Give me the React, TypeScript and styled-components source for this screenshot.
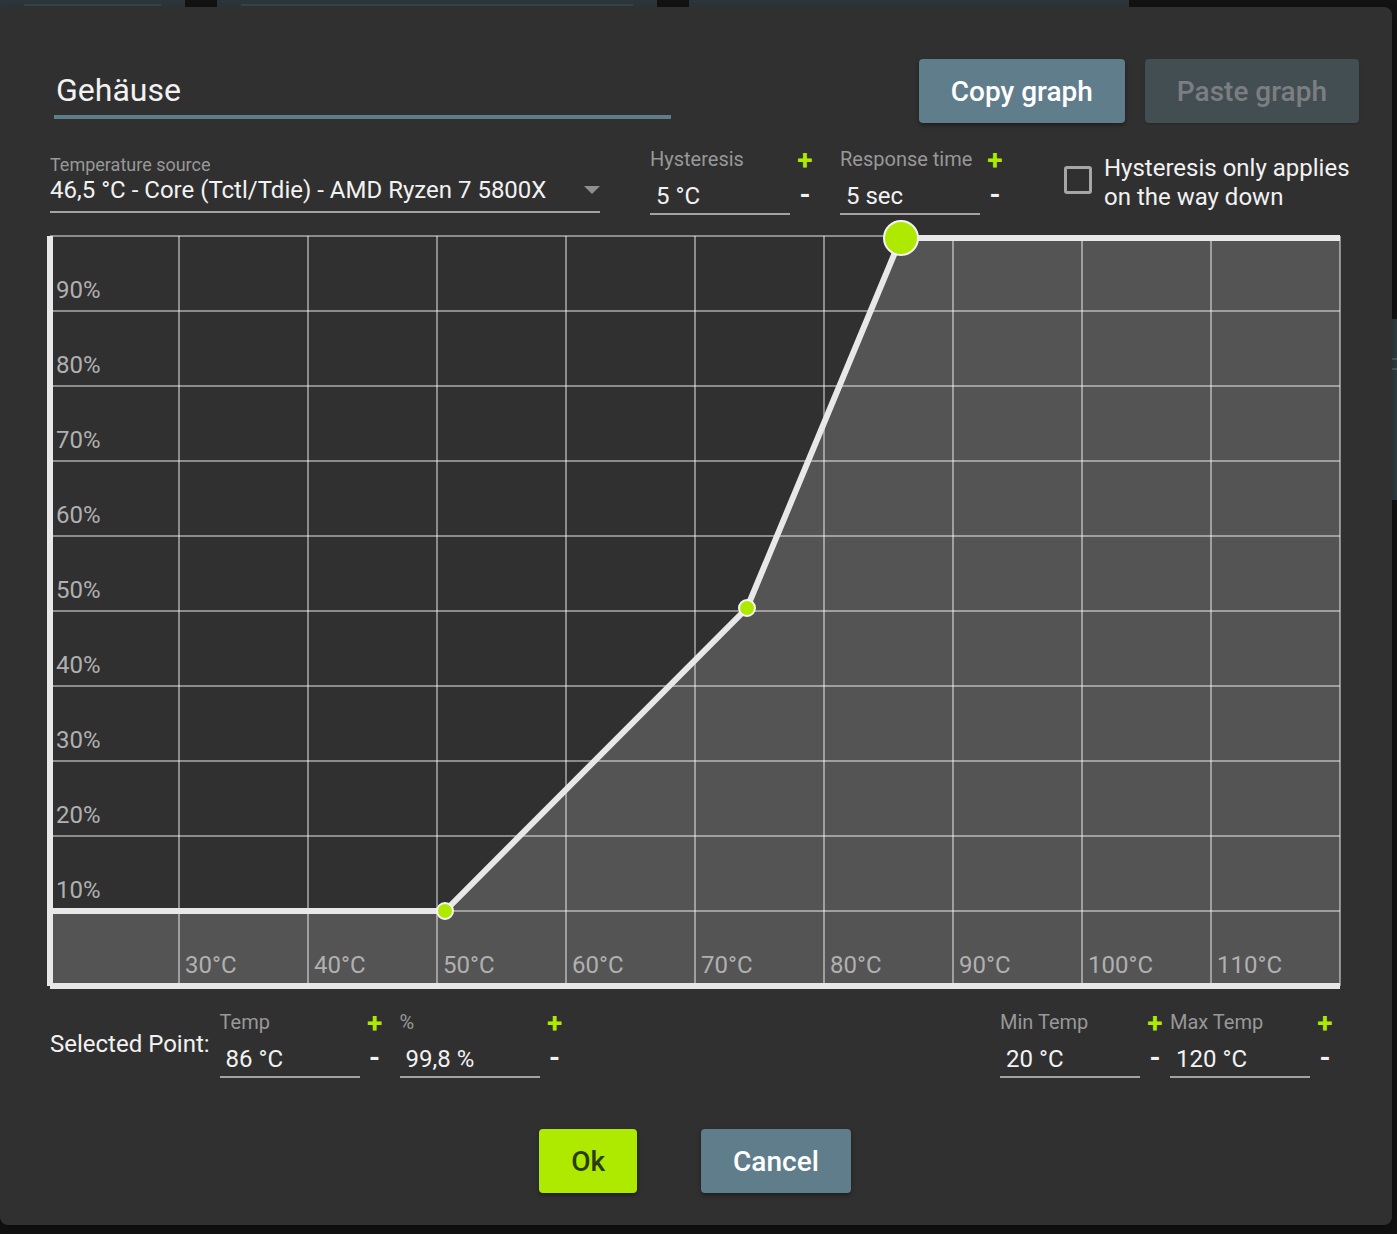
import React, { useId, useState } from "react";
import styled, { createGlobalStyle } from "styled-components";

const color = {
  page: "#121212",
  card: "#2b353a",
  cardLine: "#35444b",
  dialog: "#303030",
  text: "#f2f2f2",
  muted: "#989898",
  line: "#a3a3a3",
  primary: "#607d8b",
  accent: "#aeea00",
};

const GlobalStyle = createGlobalStyle`
  * { box-sizing: border-box; }
  body {
    margin: 0;
    background: ${color.page};
    color: ${color.text};
    font: 24px/28px Roboto, "Liberation Sans", sans-serif;
  }
  button, input, select { font: inherit; color: inherit; margin: 0; border-radius: 0; }
`;

const Screen = styled.div`
  display: grid;
  grid-template-columns: minmax(0, 1fr);
  min-height: 100vh;
  overflow: hidden;
`;

const Backdrop = styled.div`
  grid-area: 1 / 1;
  display: flex;
  flex-direction: column;
  align-items: flex-end;
  gap: 32px;
`;

const CardRow = styled.div`
  display: flex;
  align-self: stretch;
  gap: 32px;
  height: 287px;
`;

const FanCard = styled.div<{ $width: number; $lined?: boolean }>`
  flex: none;
  width: ${(p) => p.$width}px;
  padding: 4px 24px;
  background: ${color.card};

  &::before {
    content: "";
    display: ${(p) => (p.$lined ? "block" : "none")};
    height: 2px;
    background: ${color.cardLine};
  }
`;

const SideCard = styled.div`
  display: flex;
  flex-direction: column;
  gap: 8px;
  width: 440px;
  height: 181px;
  padding-top: 39px;
  background: #303c42;
`;

const SideLine = styled.div`
  height: 2px;
  background: #4d5a60;
`;

const Dialog = styled.form`
  grid-area: 1 / 1;
  align-self: start;
  display: flex;
  flex-direction: column;
  margin: 7px 5px 9px 0;
  padding: 52px 0 32px;
  border-radius: 8px;
  background: ${color.dialog};
  box-shadow: 0 4px 8px rgba(0, 0, 0, 0.3);
  z-index: 1;
`;

const Header = styled.header`
  display: flex;
  gap: 20px;
  padding: 0 33px 0 54px;
`;

const NameInput = styled.input`
  flex: 0 1 617px;
  min-width: 0;
  height: 60px;
  margin-right: auto;
  padding: 6px 2px 0;
  border: 0;
  border-bottom: 4px solid ${color.primary};
  outline: 0;
  background: none;
  font-size: 32px;
`;

const Button = styled.button<{ $accent?: boolean }>`
  height: 64px;
  padding: 2px 32px 0;
  border: 0;
  border-radius: 4px;
  background: ${(p) => (p.$accent ? color.accent : color.primary)};
  color: ${(p) => (p.$accent ? "#2a3d00" : "#fff")};
  font-size: 28px;
  font-weight: 500;
  white-space: nowrap;
  box-shadow: 0 2px 4px rgba(0, 0, 0, 0.4);

  &:disabled {
    background: #434e53;
    color: #7b7f81;
    box-shadow: 0 1px 2px rgba(0, 0, 0, 0.2);
  }
`;

const Controls = styled.div`
  display: flex;
  align-items: flex-end;
  gap: 20px;
  padding: 24px 40px 0 50px;
`;

const Source = styled.div`
  display: grid;
  flex: 0 1 550px;
  grid-template-columns: minmax(0, 1fr);
  margin: 0 30px 2px 0;
`;

const SourceLabel = styled.label`
  color: ${color.muted};
  font-size: 18px;
  line-height: 20px;
`;

const SourceSelect = styled.select`
  grid-area: 2 / 1;
  height: 38px;
  padding: 0 24px 6px 0;
  border: 0;
  border-bottom: 2px solid ${color.line};
  outline: 0;
  appearance: none;
  background: none;

  option { background: ${color.dialog}; }
`;

const Arrow = styled.svg`
  grid-area: 2 / 1;
  align-self: center;
  justify-self: end;
  margin-bottom: 8px;
  pointer-events: none;
`;

const StepperBox = styled.div`
  display: flex;
  flex: none;
  width: 170px;
`;

const StepperField = styled.div`
  display: flex;
  flex: 1;
  flex-direction: column;
  min-width: 0;
`;

const StepperLabel = styled.label`
  color: ${color.muted};
  font-size: 20px;
  line-height: 24px;
`;

const StepperInput = styled.input`
  width: 100%;
  height: 44px;
  padding: 8px 6px 0;
  border: 0;
  border-bottom: 2px solid ${color.line};
  outline: 0;
  background: none;
`;

const StepperButtons = styled.div`
  display: flex;
  flex-direction: column;
  gap: 6px;
  width: 30px;
`;

const StepButton = styled.button<{ $plus?: boolean }>`
  height: 28px;
  padding: 0;
  border: 0;
  background: none;
  color: ${(p) => (p.$plus ? color.accent : color.text)};
  font-size: 28px;
  font-weight: 700;
  line-height: 28px;
`;

const Check = styled.label`
  display: flex;
  align-items: center;
  gap: 12px;
  margin-left: auto;
  padding-bottom: 3px;
  line-height: 29px;
`;

const CheckBox = styled.input`
  flex: none;
  width: 28px;
  height: 28px;
  border: 3px solid #a6a6a6;
  border-radius: 3px;
  appearance: none;

  &:checked { background: ${color.accent}; }
`;

const CheckText = styled.span`
  width: 248px;
  padding-top: 6px;
`;

const ChartArea = styled.div`
  padding: 21px 52px 24px 50px;
`;

const ChartSvg = styled.svg`
  display: block;
  width: 100%;
  height: auto;
  overflow: visible;
  font-size: 24px;
`;

const PointRow = styled.div`
  display: flex;
  align-items: center;
  padding: 0 52px 0 50px;
`;

const PointSteppers = styled.div`
  display: flex;
  gap: 10px;
  margin: 0 auto 0 10px;
`;

const Actions = styled.footer`
  display: flex;
  justify-content: center;
  gap: 64px;
  padding: 51px 52px 0 50px;
`;

type StepperProps = { label: string; unit: string; initial: number };

function Stepper({ label, unit, initial }: StepperProps) {
  const id = useId();
  const format = (n: number) => `${String(n).replace(".", ",")} ${unit}`;
  const [text, setText] = useState(format(initial));
  const step = (by: number) => {
    const current = parseFloat(text.replace(",", ".")) || 0;
    setText(format(Math.round((current + by) * 10) / 10));
  };
  return (
    <StepperBox>
      <StepperField>
        <StepperLabel htmlFor={id}>{label}</StepperLabel>
        <StepperInput id={id} value={text} onChange={(e) => setText(e.target.value)} />
      </StepperField>
      <StepperButtons>
        <StepButton type="button" $plus onClick={() => step(1)}>+</StepButton>
        <StepButton type="button" onClick={() => step(-1)}>-</StepButton>
      </StepperButtons>
    </StepperBox>
  );
}

const WIDTH = 1290;
const HEIGHT = 750;
const COLUMN = 129;
const ROW = 75;
const points = [
  { x: 395, y: 675, r: 8 },
  { x: 697, y: 372, r: 8 },
  { x: 851, y: 2, r: 17 },
];
const steps = [1, 2, 3, 4, 5, 6, 7, 8, 9];

function FanCurve() {
  const curve = [
    `0,${points[0].y}`,
    ...points.map((p) => `${p.x},${p.y}`),
    `${WIDTH},${points[2].y}`,
  ].join(" ");
  return (
    <ChartSvg viewBox={`0 0 ${WIDTH} ${HEIGHT}`} role="img" aria-label="Fan curve">
      <polygon points={`${curve} ${WIDTH},${HEIGHT} 0,${HEIGHT}`} fill="#545454" />
      <g stroke="#fff" strokeOpacity="0.44" strokeWidth="2">
        {[0, ...steps].map((n) => (
          <line key={`h${n}`} x1="0" x2={WIDTH} y1={n * ROW} y2={n * ROW} />
        ))}
        {[...steps, 10].map((n) => (
          <line key={`v${n}`} x1={n * COLUMN} x2={n * COLUMN} y1="0" y2={HEIGHT} />
        ))}
      </g>
      <g fill="#b0b0b0">
        {steps.map((n) => (
          <text key={`p${n}`} x="6" y={(10 - n) * ROW - 13}>{n * 10}%</text>
        ))}
        {steps.map((n) => (
          <text key={`t${n}`} x={n * COLUMN + 6} y={HEIGHT - 13}>{20 + n * 10}°C</text>
        ))}
      </g>
      <g stroke="#e8e8e8" strokeWidth="6" fill="none">
        <line x1="0" x2="0" y1="0" y2={HEIGHT} />
        <line x1="0" x2={WIDTH} y1={HEIGHT} y2={HEIGHT} />
        <polyline points={curve} />
      </g>
      {points.map((p) => (
        <circle key={p.x} cx={p.x} cy={p.y} r={p.r} fill={color.accent} stroke="#f4f4f4" strokeWidth="2" />
      ))}
    </ChartSvg>
  );
}

export default function App() {
  const [name, setName] = useState("Gehäuse");
  return (
    <>
      <GlobalStyle />
      <Screen>
        <Backdrop>
          <CardRow>
            <FanCard $width={185} $lined />
            <FanCard $width={440} $lined />
            <FanCard $width={440} />
          </CardRow>
          <SideCard>
            <SideLine />
            <SideLine />
          </SideCard>
        </Backdrop>
        <Dialog onSubmit={(e) => e.preventDefault()}>
          <Header>
            <NameInput aria-label="Name" value={name} onChange={(e) => setName(e.target.value)} />
            <Button type="button">Copy graph</Button>
            <Button type="button" disabled>Paste graph</Button>
          </Header>
          <Controls>
            <Source>
              <SourceLabel htmlFor="source">Temperature source</SourceLabel>
              <SourceSelect id="source">
                <option>46,5 °C - Core (Tctl/Tdie) - AMD Ryzen 7 5800X</option>
              </SourceSelect>
              <Arrow width="16" height="8" viewBox="0 0 16 8" aria-hidden="true">
                <path d="M0 0h16L8 8z" fill="#8f8f8f" />
              </Arrow>
            </Source>
            <Stepper label="Hysteresis" unit="°C" initial={5} />
            <Stepper label="Response time" unit="sec" initial={5} />
            <Check>
              <CheckBox type="checkbox" />
              <CheckText>Hysteresis only applies on the way down</CheckText>
            </Check>
          </Controls>
          <ChartArea>
            <FanCurve />
          </ChartArea>
          <PointRow>
            <span>Selected Point:</span>
            <PointSteppers>
              <Stepper label="Temp" unit="°C" initial={86} />
              <Stepper label="%" unit="%" initial={99.8} />
            </PointSteppers>
            <Stepper label="Min Temp" unit="°C" initial={20} />
            <Stepper label="Max Temp" unit="°C" initial={120} />
          </PointRow>
          <Actions>
            <Button type="submit" $accent>Ok</Button>
            <Button type="button">Cancel</Button>
          </Actions>
        </Dialog>
      </Screen>
    </>
  );
}
